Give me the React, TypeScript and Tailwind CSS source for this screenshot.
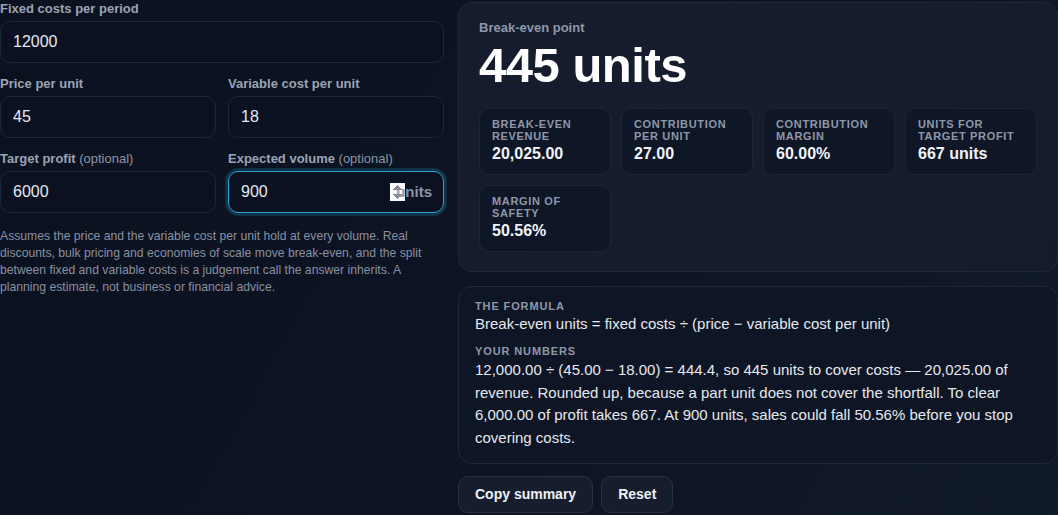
import { useState } from "react";

// Break-even calculator: inputs on the left, results on the right.

const FONT = { fontFamily: '"Liberation Sans", Arial, sans-serif' };

interface FieldProps {
  label: string;
  optional?: boolean;
  value: string;
  onChange: (v: string) => void;
  suffix?: string;
  focused?: boolean;
}

function Field({ label, optional, value, onChange, suffix, focused }: FieldProps) {
  return (
    <label className="flex flex-col">
      <span className="text-[13px] leading-[18px] font-bold text-[#9aa4b5] mb-[3px]">
        {label}
        {optional && <span className="font-normal text-[#8b95a7]"> (optional)</span>}
      </span>
      <div className="relative">
        <input
          type="number"
          value={value}
          autoFocus={focused}
          onChange={(e) => onChange(e.target.value)}
          className={`w-full h-[42px] rounded-[10px] bg-[#0b1120] px-3 text-[16px] text-[#e5e9f0] outline-none border ${
            focused
              ? "border-[#2aa7c9] shadow-[0_0_0_3px_rgba(34,160,200,0.22)] pr-[38px]"
              : "border-[#1e2738] [appearance:textfield] [&::-webkit-inner-spin-button]:appearance-none [&::-webkit-outer-spin-button]:appearance-none"
          }`}
        />
        {suffix && (
          <span className="absolute right-3 top-1/2 -translate-y-1/2 text-[15px] font-bold text-[#8b95a7] pointer-events-none">
            {suffix}
          </span>
        )}
      </div>
    </label>
  );
}

function Stat({ label, value }: { label: string; value: string }) {
  return (
    <div className="rounded-[10px] border border-[#1d2636] bg-[#0f1626] px-3 pt-[9px] pb-[10px] h-[67px]">
      <div className="text-[11px] leading-[12px] font-bold uppercase tracking-[0.06em] text-[#8e98aa]">
        {label}
      </div>
      <div className="text-[16px] leading-[20px] font-bold text-[#f1f4f8] mt-[2px]">{value}</div>
    </div>
  );
}

export default function App() {
  const [fixed, setFixed] = useState("12000");
  const [price, setPrice] = useState("45");
  const [variable, setVariable] = useState("18");
  const [target, setTarget] = useState("6000");
  const [volume, setVolume] = useState("900");

  return (
    <div
      style={FONT}
      className="min-h-screen w-full bg-[linear-gradient(120deg,#0b111e_0%,#0c1322_45%,#111a2b_100%)] text-[#e5e9f0] overflow-hidden"
    >
      <div className="grid grid-cols-[444px_600px] gap-[14px]">
        {/* Inputs */}
        <div className="flex flex-col">
          <div className="grid grid-cols-2 gap-3">
            <div className="col-span-2">
              <Field label="Fixed costs per period" value={fixed} onChange={setFixed} />
            </div>
            <Field label="Price per unit" value={price} onChange={setPrice} />
            <Field label="Variable cost per unit" value={variable} onChange={setVariable} />
            <Field label="Target profit" optional value={target} onChange={setTarget} />
            <Field
              label="Expected volume"
              optional
              value={volume}
              onChange={setVolume}
              suffix="units"
              focused
            />
          </div>
          <p className="mt-[15px] text-[12.2px] leading-[17px] text-[#8891a3]">
            Assumes the price and the variable cost per unit hold at every volume. Real discounts,
            bulk pricing and economies of scale move break-even, and the split between fixed and
            variable costs is a judgement call the answer inherits. A planning estimate, not
            business or financial advice.
          </p>
        </div>

        {/* Results */}
        <div className="flex flex-col pt-[2px]">
          <section className="rounded-[14px] border border-[#1f2939] bg-[linear-gradient(100deg,#141c2e_0%,#151d2f_60%,#131b2c_100%)] px-5 pt-[16px] pb-[19px]">
            <div className="text-[13px] leading-[18px] font-bold text-[#8e98aa]">Break-even point</div>
            <div className="text-[49px] leading-[54px] font-bold text-white tracking-[-0.01em] mt-[1px]">
              445 units
            </div>
            <div className="grid grid-cols-4 gap-[10px] mt-[16px]">
              <Stat label="Break-even revenue" value="20,025.00" />
              <Stat label="Contribution per unit" value="27.00" />
              <Stat label="Contribution margin" value="60.00%" />
              <Stat label="Units for target profit" value="667 units" />
              <Stat label="Margin of safety" value="50.56%" />
            </div>
          </section>

          <section className="mt-[14px] rounded-[14px] border border-[#1f2939] bg-[#0e1524] px-4 pt-[12px] pb-[14px]">
            <div className="text-[11px] leading-[14px] font-bold uppercase tracking-[0.08em] text-[#8e98aa]">
              The formula
            </div>
            <div className="text-[15px] leading-[22px] text-[#e5e9f0]">
              Break-even units = fixed costs ÷ (price − variable cost per unit)
            </div>
            <div className="mt-[9px] text-[11px] leading-[14px] font-bold uppercase tracking-[0.08em] text-[#8e98aa]">
              Your numbers
            </div>
            <p className="mt-[1px] text-[15px] leading-[22.6px] text-[#e5e9f0]">
              12,000.00 ÷ (45.00 − 18.00) = 444.4, so 445 units to cover costs — 20,025.00 of
              revenue. Rounded up, because a part unit does not cover the shortfall. To clear
              6,000.00 of profit takes 667. At 900 units, sales could fall 50.56% before you stop
              covering costs.
            </p>
          </section>

          <div className="mt-[12px] flex gap-2">
            <button className="h-[37px] px-4 rounded-[10px] border border-[#273142] bg-[#161e2e] text-[14px] font-bold text-[#eef1f6]">
              Copy summary
            </button>
            <button className="h-[37px] px-4 rounded-[10px] border border-[#273142] bg-[#161e2e] text-[14px] font-bold text-[#eef1f6]">
              Reset
            </button>
          </div>
        </div>
      </div>
    </div>
  );
}
